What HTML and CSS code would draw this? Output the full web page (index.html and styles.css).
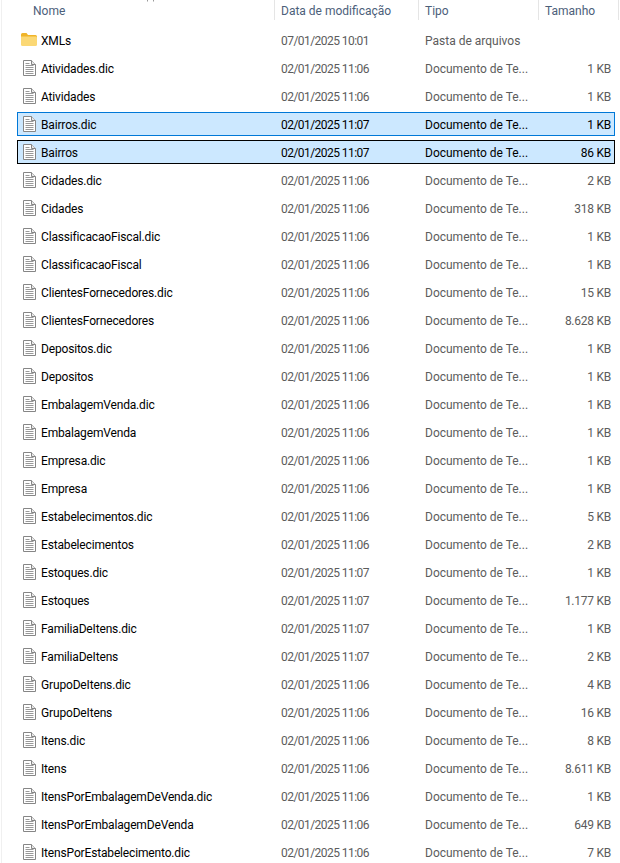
FILE: index.html
```html
<!DOCTYPE html>
<html lang="pt-BR">
<head>
<meta charset="utf-8">
<title>Explorador de Arquivos</title>
<link rel="stylesheet" href="styles.css">
</head>
<body>
<svg class="defs" width="0" height="0" aria-hidden="true">
  <symbol id="doc" viewBox="0 0 13 16">
    <path d="M.5.5h8l4 4v11H.5z" fill="#fff" stroke="#868686"/>
    <path d="M8.500.5v4h4" fill="#e8e8e8" stroke="#868686"/>
    <path d="M2.500 3.500h4M2.500 5.500h8M2.500 7.500h8M2.500 9.500h8M2.500 11.500h8M2.500 13.500h8" stroke="#999"/>
  </symbol>
  <symbol id="folder" viewBox="0 0 16 13">
    <path d="M0 1.500Q0 0 1.500 0h4L7 2h7.500Q16 2 16 3.500V5H0z" fill="#f0b429"/>
    <path d="M0 11.500V3.500h15Q16 3.500 16 4.500v7Q16 13 14.500 13h-13Q0 13 0 11.500z" fill="#fbd875"/>
  </symbol>
</svg>
<div class="header">
  <div class="hcol hname">Nome<svg class="caret" width="8" height="2" viewBox="0 0 8 2"><path d="M.5 0v1.500M6.500 0v1.500" fill="none" stroke="#999"/></svg></div>
  <div class="hcol hdate">Data de modificação</div>
  <div class="hcol htype">Tipo</div>
  <div class="hcol hsize">Tamanho</div>
</div>
<div class="list">
  <div class="row"><svg class="ico fold"><use href="#folder"/></svg><span class="name">XMLs</span><span class="date">07/01/2025 10:01</span><span class="type">Pasta de arquivos</span><span class="size"></span></div>
  <div class="row"><svg class="ico"><use href="#doc"/></svg><span class="name">Atividades.dic</span><span class="date">02/01/2025 11:06</span><span class="type">Documento de Te...</span><span class="size">1 KB</span></div>
  <div class="row"><svg class="ico"><use href="#doc"/></svg><span class="name">Atividades</span><span class="date">02/01/2025 11:06</span><span class="type">Documento de Te...</span><span class="size">1 KB</span></div>
  <div class="row sel"><svg class="ico"><use href="#doc"/></svg><span class="name">Bairros.dic</span><span class="date">02/01/2025 11:07</span><span class="type">Documento de Te...</span><span class="size">1 KB</span></div>
  <div class="row sel focus"><svg class="ico"><use href="#doc"/></svg><span class="name">Bairros</span><span class="date">02/01/2025 11:07</span><span class="type">Documento de Te...</span><span class="size">86 KB</span></div>
  <div class="row"><svg class="ico"><use href="#doc"/></svg><span class="name">Cidades.dic</span><span class="date">02/01/2025 11:06</span><span class="type">Documento de Te...</span><span class="size">2 KB</span></div>
  <div class="row"><svg class="ico"><use href="#doc"/></svg><span class="name">Cidades</span><span class="date">02/01/2025 11:06</span><span class="type">Documento de Te...</span><span class="size">318 KB</span></div>
  <div class="row"><svg class="ico"><use href="#doc"/></svg><span class="name">ClassificacaoFiscal.dic</span><span class="date">02/01/2025 11:06</span><span class="type">Documento de Te...</span><span class="size">1 KB</span></div>
  <div class="row"><svg class="ico"><use href="#doc"/></svg><span class="name">ClassificacaoFiscal</span><span class="date">02/01/2025 11:06</span><span class="type">Documento de Te...</span><span class="size">1 KB</span></div>
  <div class="row"><svg class="ico"><use href="#doc"/></svg><span class="name">ClientesFornecedores.dic</span><span class="date">02/01/2025 11:06</span><span class="type">Documento de Te...</span><span class="size">15 KB</span></div>
  <div class="row"><svg class="ico"><use href="#doc"/></svg><span class="name">ClientesFornecedores</span><span class="date">02/01/2025 11:06</span><span class="type">Documento de Te...</span><span class="size">8.628 KB</span></div>
  <div class="row"><svg class="ico"><use href="#doc"/></svg><span class="name">Depositos.dic</span><span class="date">02/01/2025 11:06</span><span class="type">Documento de Te...</span><span class="size">1 KB</span></div>
  <div class="row"><svg class="ico"><use href="#doc"/></svg><span class="name">Depositos</span><span class="date">02/01/2025 11:06</span><span class="type">Documento de Te...</span><span class="size">1 KB</span></div>
  <div class="row"><svg class="ico"><use href="#doc"/></svg><span class="name">EmbalagemVenda.dic</span><span class="date">02/01/2025 11:06</span><span class="type">Documento de Te...</span><span class="size">1 KB</span></div>
  <div class="row"><svg class="ico"><use href="#doc"/></svg><span class="name">EmbalagemVenda</span><span class="date">02/01/2025 11:06</span><span class="type">Documento de Te...</span><span class="size">1 KB</span></div>
  <div class="row"><svg class="ico"><use href="#doc"/></svg><span class="name">Empresa.dic</span><span class="date">02/01/2025 11:06</span><span class="type">Documento de Te...</span><span class="size">1 KB</span></div>
  <div class="row"><svg class="ico"><use href="#doc"/></svg><span class="name">Empresa</span><span class="date">02/01/2025 11:06</span><span class="type">Documento de Te...</span><span class="size">1 KB</span></div>
  <div class="row"><svg class="ico"><use href="#doc"/></svg><span class="name">Estabelecimentos.dic</span><span class="date">02/01/2025 11:06</span><span class="type">Documento de Te...</span><span class="size">5 KB</span></div>
  <div class="row"><svg class="ico"><use href="#doc"/></svg><span class="name">Estabelecimentos</span><span class="date">02/01/2025 11:06</span><span class="type">Documento de Te...</span><span class="size">2 KB</span></div>
  <div class="row"><svg class="ico"><use href="#doc"/></svg><span class="name">Estoques.dic</span><span class="date">02/01/2025 11:07</span><span class="type">Documento de Te...</span><span class="size">1 KB</span></div>
  <div class="row"><svg class="ico"><use href="#doc"/></svg><span class="name">Estoques</span><span class="date">02/01/2025 11:07</span><span class="type">Documento de Te...</span><span class="size">1.177 KB</span></div>
  <div class="row"><svg class="ico"><use href="#doc"/></svg><span class="name">FamiliaDeItens.dic</span><span class="date">02/01/2025 11:07</span><span class="type">Documento de Te...</span><span class="size">1 KB</span></div>
  <div class="row"><svg class="ico"><use href="#doc"/></svg><span class="name">FamiliaDeItens</span><span class="date">02/01/2025 11:07</span><span class="type">Documento de Te...</span><span class="size">2 KB</span></div>
  <div class="row"><svg class="ico"><use href="#doc"/></svg><span class="name">GrupoDeItens.dic</span><span class="date">02/01/2025 11:06</span><span class="type">Documento de Te...</span><span class="size">4 KB</span></div>
  <div class="row"><svg class="ico"><use href="#doc"/></svg><span class="name">GrupoDeItens</span><span class="date">02/01/2025 11:06</span><span class="type">Documento de Te...</span><span class="size">16 KB</span></div>
  <div class="row"><svg class="ico"><use href="#doc"/></svg><span class="name">Itens.dic</span><span class="date">02/01/2025 11:06</span><span class="type">Documento de Te...</span><span class="size">8 KB</span></div>
  <div class="row"><svg class="ico"><use href="#doc"/></svg><span class="name">Itens</span><span class="date">02/01/2025 11:06</span><span class="type">Documento de Te...</span><span class="size">8.611 KB</span></div>
  <div class="row"><svg class="ico"><use href="#doc"/></svg><span class="name">ItensPorEmbalagemDeVenda.dic</span><span class="date">02/01/2025 11:06</span><span class="type">Documento de Te...</span><span class="size">1 KB</span></div>
  <div class="row"><svg class="ico"><use href="#doc"/></svg><span class="name">ItensPorEmbalagemDeVenda</span><span class="date">02/01/2025 11:06</span><span class="type">Documento de Te...</span><span class="size">649 KB</span></div>
  <div class="row"><svg class="ico"><use href="#doc"/></svg><span class="name">ItensPorEstabelecimento.dic</span><span class="date">02/01/2025 11:06</span><span class="type">Documento de Te...</span><span class="size">7 KB</span></div>
</div>
</body>
</html>
```
FILE: styles.css
```css
* { box-sizing: border-box; }
html, body { margin: 0; height: 863px; overflow: hidden; background: #fff; }
body { font-family: Roboto, "Open Sans", sans-serif; font-size: 12px; color: #000; border-left: 1px solid #f0f0f0; margin-left: 1px; }
.defs { display: block; height: 0; }
.header { display: grid; grid-template-columns: 273px 144px 120px 80px; height: 20px; margin-bottom: 2px; color: #4c607a; }
.hcol { display: flex; align-items: center; padding: 2px 0 0 6px; border-right: 1px solid #e5e5e5; position: relative; }
.hname { padding-left: 31px; }
.caret { position: absolute; left: 145px; top: 0; }
.list { display: flex; flex-direction: column; gap: 4px; padding: 6px 5px 0 15px; }
.row { display: grid; grid-template-columns: 258px 144px 120px 74px; align-items: center; height: 24px; padding-top: 2px; flex: none; position: relative; border: 1px solid transparent; color: #5c5c5c; }
.row.sel { background: #cce8ff; border-color: #0078d7; color: #000; }
.row.focus { border-color: #000; }
.ico { position: absolute; left: 5px; top: 3px; width: 13px; height: 16px; }
.ico.fold { left: 3px; top: 4px; width: 16px; height: 13px; }
.name { padding-left: 23px; color: #000; white-space: nowrap; letter-spacing: -0.16px; }
.date { padding-left: 5px; letter-spacing: -0.55px; white-space: nowrap; }
.type { padding-left: 5px; white-space: nowrap; }
.size { text-align: right; padding-right: 3px; white-space: nowrap; letter-spacing: -0.25px; }
```
